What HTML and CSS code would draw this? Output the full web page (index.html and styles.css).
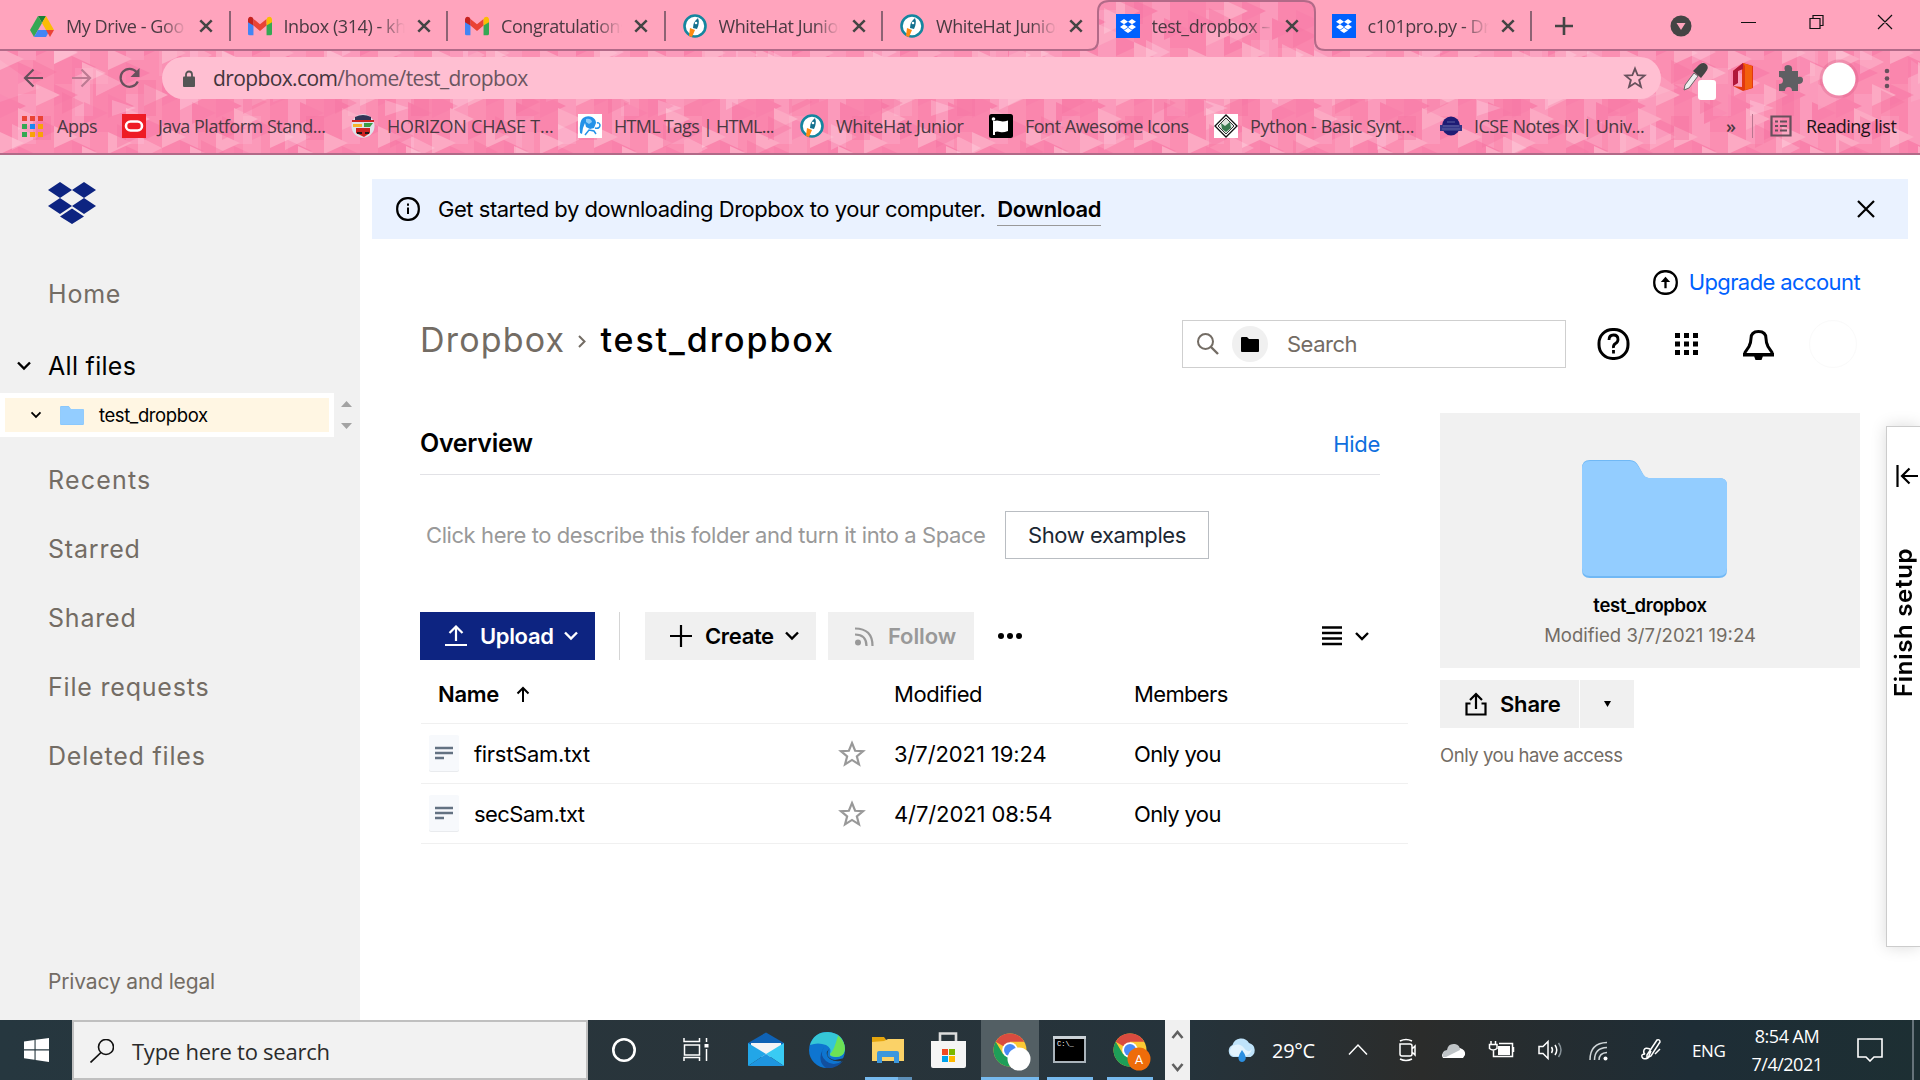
FILE: index.html
```html
<!DOCTYPE html>
<html lang="en">
<head>
<meta charset="utf-8">
<title>test_dropbox – Dropbox</title>
<link rel="stylesheet" href="styles.css">
</head>
<body>
<svg class="defs" width="0" height="0">
  <defs>
    <pattern id="pinkA" width="108" height="84" patternUnits="userSpaceOnUse">
      <rect width="108" height="84" fill="#fb8fb2"/>
      <path fill="#fa86ad" d="M0 0h18v84H0zM54 14h18v70H54zM90 0h18v48H90z"/>
      <path fill="#fb9abb" d="M18 10h18v50H18zM72 0h18v84H72z"/>
      <path fill="#f981ab" d="M0 10l26 12-26 12zM36 34l24 11-24 11zM72 56l24 11-24 11zM84 18l24 11-24 11zM18 62l24 11-24 11zM54 0l24 11-24 11z"/>
      <path fill="#fca9c3" d="M36 0l24 11-24 11zM18 24l24 11-24 11zM54 42l24 11-24 11zM82 62l24 11-24 11zM0 48l24 11-24 11z"/>
    </pattern>
    <pattern id="pinkB" width="273" height="116" patternUnits="userSpaceOnUse">
      <path fill="#fff" fill-opacity=".2" d="M12 8l26 13-26 13zM54 40l24 12-24 12zM96 70l26 13-26 13zM138 20l24 12-24 12zM180 84l26 13-26 13zM222 50l24 12-24 12zM112 100l24 8-24 8zM190 44l22 11-22 11z"/>
      <path fill="#fff" fill-opacity=".09" d="M75 68h18v48H75zM159 40h18v36h-18zM243 0h18v50h-18zM0 60l40 28-40 14z"/>
      <path fill="#f5729f" fill-opacity=".4" d="M33 60l24 12-24 12zM117 8l24 12-24 12zM201 24l24 12-24 12zM243 90l24 12-24 12zM138 80h18v36h-18zM33 0h18v24H33zM222 0l24 12-24 12zM62 92l22 11-22 11z"/>
    </pattern>
    <symbol id="x" viewBox="0 0 14 14"><path d="M2 2l10 10M12 2L2 12" fill="none" stroke="currentColor" stroke-width="2.200"/></symbol>
    <symbol id="dbx" viewBox="0 0 48 42"><path d="M12 0l12 8-12 8L0 8zM36 0l12 8-12 8-12-8zM12 16l12 8-12 8L0 24zM36 16l12 8-12 8-12-8zM24 26.500l12 8-12 7.500-12-7.500z"/></symbol>
    <symbol id="gmail" viewBox="0 0 22 17"><path fill="#4285f4" d="M0 3l5 4v10H1.500Q0 17 0 15.500z"/><path fill="#34a853" d="M22 3l-5 4v10h3.500q1.500 0 1.500-1.500z"/><path fill="#ea4335" d="M5 2l6 5 6-5v6l-6 5-6-5z"/><path fill="#c5221f" d="M0 4V2q1-3 4-1.500L5 2v6L0 5z"/><path fill="#fbbc04" d="M22 4V2q-1-3-4-1.500L17 2v6l5-3z"/></symbol>
    <symbol id="hat" viewBox="0 0 24 24"><circle cx="12" cy="12" r="10.500" fill="#fff" stroke="#14869f" stroke-width="2.600"/><path fill="#14708e" d="M15 4q2 5-1 11l-4-1q0-6 5-10z"/><circle cx="13" cy="9" r="1.300" fill="#fff"/><path fill="#ff8a10" d="M7 14l5 2-3 7-3-1z"/></symbol>
    <symbol id="chev" viewBox="0 0 16 10"><path d="M2 1.500l6 6 6-6" fill="none" stroke="currentColor" stroke-width="2.400"/></symbol>
    <symbol id="star" viewBox="0 0 26 26"><path d="M13 2.800l2.900 7.200 7.400.4-5.800 4.800 2 7.500L13 18.500l-6.500 4.200 2-7.500-5.800-4.800 7.400-.4z" fill="none" stroke="currentColor" stroke-width="2"/></symbol>
    <symbol id="folder" viewBox="0 0 146 118"><path fill="#70b8f5" d="M0 8q0-8 8-8h40q6 0 9 6l5 9q2 3 5 3h71q8 0 8 7v85q0 8-8 8H8q-8 0-8-8z"/><path fill="#93cdff" d="M0 9q0-8 8-8h40q6 0 9 6l5 8q2 3 5 3h71q8 0 8 7v83q0 8-8 8H8q-8 0-8-8z"/></symbol>
    <symbol id="txt" viewBox="0 0 30 37"><rect y="1" width="30" height="36" rx="2" fill="#e9ebee"/><rect width="30" height="36" rx="2" fill="#f7f9fc"/><path d="M6 13h18M6 18h18M6 23h9" stroke="#637282" stroke-width="2.600"/></symbol>
    <symbol id="chrome" viewBox="0 0 36 36"><circle cx="18" cy="18" r="16.500" fill="#fcc934"/><path fill="#d94b3f" d="M18 18L3.700 9.800A16.500 16.500 0 0 1 32.300 9.800H18z"/><path fill="#1e9e58" d="M18 34.500A16.500 16.500 0 0 1 3.700 9.800L11 22l12 5z"/><circle cx="18" cy="18" r="7.800" fill="#fff"/><circle cx="18" cy="18" r="6" fill="#4a8af4"/></symbol>
  </defs>
</svg>

<header class="browser">
  <svg class="backdrop" width="1920" height="155" viewBox="0 0 1920 155">
    <rect width="1920" height="155" fill="url(#pinkA)"/><rect width="1920" height="155" fill="url(#pinkB)"/>
    <path d="M-2 -2V50H1088Q1098 50 1098 40V12Q1098 1 1109 1H1304Q1315 1 1315 12V40Q1315 50 1325 50H1922V-2Z" fill="#ffa4bd" stroke="#b26a88" stroke-width="2"/>
    <path d="M0 154h1920" stroke="#b26a88" stroke-width="2"/>
  </svg>
  <div class="tabs">
    <div class="tab"><svg class="fav" viewBox="0 0 24 22"><path fill="#188038" d="M8 1h8l-4 7z"/><path fill="#34a853" d="M8 1l4 7-8 14-4-7z"/><path fill="#fbbc04" d="M16 1l8 14h-8L12 8z"/><path fill="#4285f4" d="M8 15h12l-4 7H4z"/><path fill="#ea4335" d="M16 15h8l-4 7z"/></svg><span>My Drive - Goo</span><svg class="close"><use href="#x"/></svg></div>
    <div class="tab"><svg class="fav"><use href="#gmail"/></svg><span>Inbox (314) - kh</span><svg class="close"><use href="#x"/></svg></div>
    <div class="tab"><svg class="fav"><use href="#gmail"/></svg><span>Congratulations</span><svg class="close"><use href="#x"/></svg></div>
    <div class="tab"><svg class="fav"><use href="#hat"/></svg><span>WhiteHat Junior</span><svg class="close"><use href="#x"/></svg></div>
    <div class="tab noline"><svg class="fav"><use href="#hat"/></svg><span>WhiteHat Junior</span><svg class="close"><use href="#x"/></svg></div>
    <div class="tab noline active"><i class="fav blue"><svg width="16" height="16"><use href="#dbx"/></svg></i><span>test_dropbox –</span><svg class="close"><use href="#x"/></svg></div>
    <div class="tab"><i class="fav blue"><svg width="16" height="16"><use href="#dbx"/></svg></i><span>c101pro.py - Dr</span><svg class="close"><use href="#x"/></svg></div>
    <svg class="plus" width="18" height="18" viewBox="0 0 18 18"><path d="M9 0v18M0 9h18" stroke="#444" stroke-width="2.600"/></svg>
    <svg class="guest" width="22" height="22" viewBox="0 0 22 22"><circle cx="11" cy="11" r="10.500" fill="#444"/><path d="M6.500 8h9l-4.500 7z" fill="#ffa4bd"/></svg>
    <svg class="win" width="152" height="16" viewBox="0 0 152 16"><path d="M0 8.500h15M69 4.500h10v10H69zM72 4.500v-3h10v10h-3M137 1l14 14M151 1l-14 14" fill="none" stroke="#111" stroke-width="1.200"/></svg>
  </div>
  <div class="toolbar">
    <svg class="navs" width="162" height="42" viewBox="0 0 162 42"><g fill="none" stroke-width="2.200"><path d="M43 21H25M33.500 12.500L25 21l8.500 8.500" stroke="#67505c"/><path d="M72 21h18M81.500 12.500L90 21l-8.500 8.500" stroke="#bd7a93"/><path d="M136.500 15a9 9 0 1 0 1.300 9.500" stroke="#67505c"/></g><path d="M139.500 11v9h-9z" fill="#67505c"/></svg>
    <div class="omni"><svg width="12" height="17" viewBox="0 0 12 17"><path d="M3 7V4.500a3 3 0 0 1 6 0V7" fill="none" stroke="#555" stroke-width="1.800"/><rect y="6.500" width="12" height="10.500" rx="1" fill="#555"/></svg><p><b>dropbox.com</b>/home/test_dropbox</p><svg class="fave" width="24" height="24"><use href="#star"/></svg></div>
    <svg class="ext" width="252" height="46" viewBox="0 0 252 46">
      <path d="M24 28l9-12 4 3-9 12-5 2z" fill="#eee" stroke="#666"/><path d="M32 14l4-4q5-6 9-3t-1 9l-4 5z" fill="#444"/><rect x="37" y="23" width="18" height="20" rx="3" fill="#fff"/>
      <path d="M72 14l10-8 10 3v22l-10 3-10-5 9 1V12l-5 2v12l-4 2z" fill="#e2380f"/><path d="M72 14l10-8v6l-5 2v12l-5 3z" fill="#b0173a"/><path d="M82 6l9 3v22l-7 2V9z" fill="#f3600f"/>
      <path d="M118 14h6q-2-6 3-6t4 6h6v6q5-1 5 3t-5 4v7h-6q0-4-3.500-4T124 34h-6v-7q4 0 4-3.500T118 20z" fill="#5f5f63"/>
      <circle cx="178" cy="22" r="19.500" fill="#d95e87" fill-opacity=".35"/><circle cx="178" cy="22" r="16.500" fill="#fff"/>
      <circle cx="226" cy="14" r="2.300" fill="#67505c"/><circle cx="226" cy="21.500" r="2.300" fill="#67505c"/><circle cx="226" cy="29" r="2.300" fill="#67505c"/>
    </svg>
  </div>
  <nav class="marks">
    <a class="m1"><svg width="21" height="21" viewBox="0 0 21 21"><path fill="#ea4335" d="M0 0h5v5H0zM8 0h5v5H8zM16 0h5v5h-5z"/><path fill="#34a853" d="M0 8h5v5H0zM0 16h5v5H0z"/><path fill="#1a87f0" d="M8 8h5v5H8z"/><path fill="#f9a208" d="M16 8h5v5h-5zM8 16h5v5H8zM16 16h5v5h-5z"/></svg>Apps</a>
    <a class="m2"><svg width="24" height="24" viewBox="0 0 24 24"><path fill="#ee1c25" d="M0 0h24v24H0z"/><rect x="4" y="7.500" width="16" height="9" rx="4.500" fill="none" stroke="#fff" stroke-width="2.600"/></svg>Java Platform Stand...</a>
    <a class="m3"><svg width="24" height="24" viewBox="0 0 24 24"><ellipse cx="12" cy="12" rx="11.500" ry="11.800" fill="#dfe2ea"/><path fill="#335" d="M4 3q8-4 16 0v3H4z"/><path fill="#c22" d="M5 14h14v5l-6 4-8-4zM1 6h22v2H1z"/><path fill="#f5b42a" d="M2 10h9v3H2z"/><path fill="#3c9d48" d="M13 9h9l-3 4h-6z"/><path fill="#201518" d="M6 18h5v2H6zM14 18h4v2h-4z"/></svg>HORIZON CHASE T...</a>
    <a class="m4"><svg width="24" height="24" viewBox="0 0 24 24"><path fill="#fff" d="M0 0h24v24H0z"/><path fill="#2492e8" d="M2 19Q1 7 5 4q4-3 9-1 4 2 4 6l-2 5-4 1-4-2-1-4-2 5-1 6z"/><path fill="#8ccbf8" d="M8 5q5-1 6 3l-3 2-3-2z"/><path d="M7 21l4-5 5 1 2 3M17 14q5 1 5-3-1-3-3-2" fill="none" stroke="#2492e8" stroke-width="1.500"/></svg>HTML Tags | HTML...</a>
    <a class="m5"><svg width="24" height="24"><use href="#hat"/></svg>WhiteHat Junior</a>
    <a class="m6"><svg width="24" height="24" viewBox="0 0 24 24"><rect width="24" height="24" rx="2.500"/><path fill="#fff" d="M5 7q3-1 6 0t8-.5V17q-5 2-8 1t-5 0v3H4V7z"/><circle cx="4.500" cy="5" r="1.800" fill="#fff"/></svg>Font Awesome Icons</a>
    <a class="m7"><svg width="24" height="24" viewBox="0 0 24 24"><path fill="#fff" d="M0 0h24v24H0z"/><path d="M12 1l11 11-11 11L1 12z" fill="#fff" stroke="#111" stroke-width="1.300"/><path d="M12 4l8 8-8 8-8-8z" fill="#dde4de" stroke="#333"/><path d="M7 9l4 3 5-4 1 6-5 4-4-3z" fill="#397950"/></svg>Python - Basic Synt...</a>
    <a class="m8"><svg width="22" height="20" viewBox="0 0 22 20"><ellipse cx="11" cy="10" rx="9" ry="9.500" fill="#1e1c74"/><path d="M0 9h22v6H0z" fill="#343687"/><path d="M3 10h16M2 13h18M7 6h8" stroke="#5c60a0"/></svg>ICSE Notes IX | Univ...</a>
    <b class="more">»</b><i class="bar"></i>
    <a class="m9"><svg width="22" height="22" viewBox="0 0 22 22"><path d="M1.500 1.500h19v19h-19z" fill="none" stroke="#67505c" stroke-width="2.200"/><path d="M5 6.500h3M10 6.500h7M5 11h3M10 11h7M5 15.500h3M10 15.500h7" stroke="#67505c" stroke-width="2.200"/></svg>Reading list</a>
  </nav>
</header>

<main class="app">
  <aside class="side">
    <svg class="logo" width="48" height="42" fill="#0d2481"><use href="#dbx"/></svg>
    <a class="home">Home</a>
    <a class="all"><svg width="16" height="10"><use href="#chev"/></svg>All files</a>
    <div class="tree"><div class="well"><div class="node"><svg width="12" height="8"><use href="#chev"/></svg><svg width="24" height="19"><use href="#folder"/></svg>test_dropbox</div></div>
      <svg class="arrows" width="26" height="44" viewBox="0 0 26 44"><path d="M7 14l5.500-6 5.500 6zM7 30l5.500 6 5.500-6z" fill="#a3a3a3"/></svg></div>
    <nav class="links"><a class="wide">Recents</a><a>Starred</a><a>Shared</a><a>File requests</a><a>Deleted files</a></nav>
    <footer>Privacy and legal</footer>
  </aside>

  <section class="content">
    <div class="banner">
      <svg width="24" height="24" viewBox="0 0 24 24"><rect x="1.200" y="1.200" width="21.600" height="21.600" rx="10" fill="none" stroke="#000" stroke-width="2.200"/><path d="M12 10.500V17M12 6.500v2.300" stroke="#000" stroke-width="2"/></svg>
      <span class="msg">Get started by downloading Dropbox to your computer.</span><b>Download</b>
      <svg class="dismiss" width="18" height="18" viewBox="0 0 18 18"><path d="M1 1l16 16M17 1L1 17" stroke="#000" stroke-width="2.200"/></svg>
    </div>
    <div class="upgrade"><svg width="25" height="25" viewBox="0 0 24 24"><rect x="1.200" y="1.200" width="21.600" height="21.600" rx="10" fill="none" stroke="#000" stroke-width="2.200"/><path d="M12 17.500V9" stroke="#000" stroke-width="2.200"/><path d="M7.500 11.500L12 6.500l4.500 5z"/></svg><span>Upgrade account</span></div>
    <div class="titlebar">
      <h1><span>Dropbox</span><svg width="10" height="15" viewBox="0 0 10 15"><path d="M2 2l5.500 5.500L2 13" fill="none" stroke="#736c64" stroke-width="2"/></svg><strong>test_dropbox</strong></h1>
      <div class="search"><svg width="24" height="24" viewBox="0 0 24 24"><circle cx="9.500" cy="9.500" r="7.500" fill="none" stroke="#736c64" stroke-width="2"/><path d="M15 15l7 7" stroke="#736c64" stroke-width="2.400"/></svg><i><svg width="18" height="15" viewBox="0 0 18 15"><path d="M0 1q0-1 1-1h5l2 2h9q1 0 1 1v11q0 1-1 1H1q-1 0-1-1z"/></svg></i><span>Search</span></div>
      <svg class="tools" width="294" height="50" viewBox="0 0 294 50">
        <rect x="33" y="10.500" width="29" height="29" rx="13.500" fill="none" stroke="#000" stroke-width="3"/><path d="M43 21q0-5 4.500-5t4.500 4.500q0 2.500-2.500 4T47.500 29M47.500 31v3.500" fill="none" stroke="#000" stroke-width="2.800"/>
        <path d="M109 14h5v5h-5zM118 14h5v5h-5zM127 14h5v5h-5zM109 22.500h5v5h-5zM118 22.500h5v5h-5zM127 22.500h5v5h-5zM109 31h5v5h-5zM118 31h5v5h-5zM127 31h5v5h-5z"/>
        <path d="M179 35.500v-2l4-6q2-4 2-8 0-7 7.500-7t7.500 7q0 4 2 8l4 6v2z" fill="none" stroke="#000" stroke-width="3"/><path d="M177 34h31v3.500h-31zM188 37h9l-1.500 4h-6z"/>
        <circle cx="267" cy="25" r="23.500" fill="none" stroke="#fafafa"/>
      </svg>
    </div>
    <div class="columns">
      <div class="files">
        <div class="overview"><h2>Overview</h2><a>Hide</a></div>
        <div class="describe"><span>Click here to describe this folder and turn it into a Space</span><div class="examples">Show examples</div></div>
        <div class="actions">
          <div class="btn upload"><svg width="22" height="22" viewBox="0 0 22 22"><path d="M11 16V2M4.500 8L11 1.500 17.500 8M0 20h22" fill="none" stroke="#fff" stroke-width="2.200"/></svg><span>Upload</span><svg width="16" height="10"><use href="#chev"/></svg></div>
          <i class="rule"></i>
          <div class="btn create"><svg width="22" height="22" viewBox="0 0 22 22"><path d="M11 0v22M0 11h22" stroke="#000" stroke-width="2.200"/></svg><span>Create</span><svg width="16" height="10"><use href="#chev"/></svg></div>
          <div class="btn follow"><svg width="19" height="19" viewBox="0 0 19 19"><g fill="none" stroke="#999" stroke-width="2.200"><path d="M0 1.500q17.500 0 17.500 17.500M0 7.500q11.500 0 11.500 11.500"/></g><circle cx="3" cy="15.500" r="3" fill="#999"/></svg><span>Follow</span></div>
          <svg class="dots" width="24" height="6" viewBox="0 0 24 6"><circle cx="3" cy="3" r="3"/><circle cx="12" cy="3" r="3"/><circle cx="21" cy="3" r="3"/></svg>
          <svg class="view" width="48" height="20" viewBox="0 0 48 20"><path d="M0 1.500h20M0 7h20M0 12.500h20M0 18h20" stroke="#000" stroke-width="2.400"/><path d="M34 7l6 6 6-6" fill="none" stroke="#000" stroke-width="2.400"/></svg>
        </div>
        <div class="table">
          <div class="row head"><div class="name"><b>Name</b><svg width="14" height="16" viewBox="0 0 14 16"><path d="M7 16V2M1.500 7.500L7 2l5.500 5.500" fill="none" stroke="#000" stroke-width="2"/></svg></div><div class="date mod">Modified</div><div class="who">Members</div></div>
          <div class="row"><div class="name"><svg width="30" height="37"><use href="#txt"/></svg><span>firstSam.txt</span><svg class="st" width="28" height="28"><use href="#star"/></svg></div><div class="date">3/7/2021 19:24</div><div class="who">Only you</div></div>
          <div class="row"><div class="name"><svg width="30" height="37"><use href="#txt"/></svg><span class="tight">secSam.txt</span><svg class="st" width="28" height="28"><use href="#star"/></svg></div><div class="date">4/7/2021 08:54</div><div class="who">Only you</div></div>
        </div>
      </div>
      <div class="details">
        <div class="card"><svg width="145" height="118" viewBox="0 0 146 118" preserveAspectRatio="none"><use href="#folder" width="146" height="118"/></svg><b>test_dropbox</b><span>Modified 3/7/2021 19:24</span></div>
        <div class="share"><div class="go"><svg width="22" height="24" viewBox="0 0 22 24"><path d="M11 17V2M5 8l6-6 6 6M5.500 11.500H1.500V22.500h19v-11h-4" fill="none" stroke="#000" stroke-width="2.200"/></svg><span>Share</span></div><div class="drop"><svg width="7" height="6" viewBox="0 0 7 6"><path d="M0 0h7L3.500 6z"/></svg></div></div>
        <p>Only you have access</p>
      </div>
    </div>
  </section>
  <div class="setup"><svg width="22" height="24" viewBox="0 0 22 24"><path d="M1.500 1v22M22 12H6M13.500 4.500L6 12l7.500 7.500" fill="none" stroke="#000" stroke-width="2.200"/></svg><span>Finish setup</span></div>
</main>

<footer class="taskbar">
  <div class="start"><svg width="25" height="24" viewBox="0 0 25 24"><path fill="#fff" d="M0 3.500l10.500-1.500v9.300H0zM11.600 1.800L25 0v11.300H11.600zM0 12.400h10.500v9.300L0 20.300zM11.600 12.400H25V24l-13.400-1.900z"/></svg></div>
  <div class="find"><svg width="24" height="24" viewBox="0 0 24 24"><circle cx="16" cy="8" r="7.500" fill="none" stroke="#111" stroke-width="1.600"/><path d="M11 13.500L.5 23.500" stroke="#111" stroke-width="1.700"/></svg><span>Type here to search</span></div>
  <div class="pins">
    <svg width="577" height="60" viewBox="588 0 577 60">
      <circle cx="624" cy="30" r="10.700" fill="none" stroke="#fff" stroke-width="2.600"/>
      <path d="M684 18v3.500h15.500V18M684 41v-3.500h15.500V41M684.500 25h15v10h-15zM706.500 18v4M706.500 29v12" fill="none" stroke="#fff" stroke-width="1.500"/><path d="M704.500 24h4v3.500h-4z" fill="#fff"/>
      <path fill="#0f62b5" d="M748 23l18-10.500L784 23v6h-36z"/><path fill="#f4f4f6" d="M751 23h30v14h-30z"/><path fill="#22a6e8" d="M748 23l18 11-18 12z"/><path fill="#39cbf4" d="M784 23v23l-18-12z"/><path fill="#1e95df" d="M748 46l18-12 18 12z"/>
      <circle cx="827" cy="30" r="18" fill="#0e75d0"/><path fill="#35c6d6" d="M810 25Q814 12 828 12q16 1 17 17-1 8-9 8-7 0-6-3 2-6-4-9-8-3-16 0z"/><path fill="#6de254" d="M838 15.500q7 6 7 13.500-1 8-9 8-6-1-6-3 4-3 8-18.500z"/><path fill="#124f9e" d="M824 27q-5 8 2 14t17 0q-6 8-17 7-10-7-2-21z"/><path fill="#27343b" d="M829 29q-5 9 6 11l10-2v2q-9 3-15-1-6-5-1-10z"/>
      <path fill="#e5a50d" d="M872 17h12l3 4v4h-15z"/><path fill="#fbd267" d="M872 22l12-1 4-2h16v22h-32z"/><path fill="#3c97dd" d="M877 43V33q0-2 2-2h18q2 0 2 2v10h-5v-6h-12v6z"/>
      <path d="M940 24V13.500h16V24" fill="none" stroke="#ddd" stroke-width="2.600"/><path fill="#f5f5f5" d="M931 21h35v25q0 2-2 2h-31q-2 0-2-2z"/><path fill="#f04a23" d="M942 29h6v6h-6z"/><path fill="#7bb800" d="M949 29h6v6h-6z"/><path fill="#00a2ec" d="M942 36h6v6h-6z"/><path fill="#ffb900" d="M949 36h6v6h-6z"/>
      <path fill="#535f64" d="M981 0h58v60h-58z"/><use href="#chrome" x="992" y="12" width="36" height="36"/><circle cx="1019" cy="39" r="11.500" fill="#fff"/>
      <path fill="#000" stroke="#aab4bb" stroke-width="2" d="M1054 17h31v25h-31z"/><path fill="#cbd2d7" d="M1053 16h33v3h-33z"/>
      <use href="#chrome" x="1112" y="12" width="36" height="36"/><circle cx="1139" cy="39" r="11.500" fill="#ee6c0a"/>
      <path fill="#76b9ed" d="M865 57h33v3h-33zM981 57h58v3h-58zM1047 57h46v3h-46zM1107 57h46v3h-46z"/><path fill="#5d8fb8" d="M898 57h14v3h-14z"/>
      <text class="cmd" x="1057" y="26">C:\_</text><text class="av" x="1139" y="43.500">A</text>
    </svg>
  </div>
  <svg class="scroll" width="25" height="60" viewBox="0 0 25 60"><path d="M7.500 18l5-6 5 6M7.500 44l5 6 5-6" fill="none" stroke="#606060" stroke-width="2.600"/></svg>
  <svg class="rain" width="32" height="26" viewBox="0 0 32 26"><path d="M7 19a6.500 6.500 0 0 1-.5-12A9 9 0 0 1 23 5a7.500 7.500 0 0 1 1.500 14z" fill="#bfe3fa"/><path d="M6 8q8-4 12 2t8 1q-2 7-8 7H8q-7-2-2-10z" fill="#e2f3fd"/><path d="M16 12q6 8 2.500 11-2.500 2-5 0-3-3 2.500-11z" fill="#2c8fe0"/></svg>
  <span class="temp">29°C</span>
  <svg class="tray" width="330" height="60" viewBox="1340 0 330 60"><g fill="none" stroke="#fff" stroke-width="1.500">
    <path d="M1349 34.500l9-9.500 9 9.500M1400 24h10q2 0 2 2v8q0 2-2 2h-8q-2 0-2-2zM1412 29l3-3v9l-3-3M1400 21q6-3 12 0M1400 39q6 3 12 0"/>
    <path d="M1491 21v3.500M1495.500 21v3.500M1489.500 24.500h7.500v4q-4 3-7.500 0zM1493.500 30v6.500h19v-13H1499M1513.500 27v5"/>
    <path d="M1539 26.500h4l5-5v17l-5-5h-4zM1551.500 27q2 3 0 6M1555 25q3.500 5 0 10"/><path d="M1558.500 23q5 7 0 14" stroke="#859096"/>
    <path d="M1590 40q0-17 17-17.500M1594.500 40q0-12 12.500-12.500M1599 40q0-7 8-7.500" stroke="#cfd5d8"/><path d="M1647 35l10-15q3-1 3 2l-9 14-4 2zM1650 29q-5-2-6 1t1 4q-4 0-3 3t6 1l3-7M1655 34l5-5"/>
  </g><path fill="#fff" d="M1498 26h12v9h-12zM1443 38q-3-4 3-7l14-3q6 2 5 7l-2 3z"/><path fill="#bfc4c7" d="M1443 37q-2-6 4-7 1-7 8-6 5 1 5 6l-14 7z"/><circle cx="1605.500" cy="38.500" r="2" fill="#fff"/></svg>
  <span class="lang">ENG</span>
  <div class="clock"><span>8:54 AM</span><span>7/4/2021</span></div>
  <svg class="note" width="26" height="24" viewBox="0 0 26 24"><path d="M1 1h24v18h-8l-4 4-4-4H1z" fill="none" stroke="#fff" stroke-width="1.600"/></svg>
  <i class="peek"></i>
</footer>
</body>
</html>
```

FILE: styles.css
```css
* { box-sizing: border-box; }
body { margin: 0; width: 1920px; height: 1080px; overflow: hidden; background: #fff; color: #000; font-family: Inter, "Liberation Sans", sans-serif; display: flex; flex-direction: column; }
svg { display: block; flex: none; }
i { display: block; flex: none; }
p, h1, h2 { margin: 0; font-weight: 400; }
span, a, b { white-space: nowrap; }
.defs { position: absolute; }

/* Browser chrome */
.browser { height: 155px; flex: none; position: relative; font-family: "Open Sans", "Noto Sans", sans-serif; color: #4a3a42; isolation: isolate; }
.backdrop { position: absolute; inset: 0; z-index: -1; }
.tabs { height: 51px; display: flex; align-items: center; padding-left: 13px; }
.tab { width: 217.5px; height: 30px; flex: none; display: flex; align-items: center; padding-left: 17px; border-right: 2px solid #8d6374; }
.tab.noline { border-color: transparent; }
.tab.active { padding-left: 15px; width: 214px; }
.fav { width: 24px; height: 24px; margin-right: 12px; }
.fav.blue { background: #0061fe; display: grid; place-items: center; fill: #fff; }
.tab span { width: 121px; overflow: hidden; font-size: 18px; letter-spacing: -.43px; -webkit-mask-image: linear-gradient(90deg, #000 78%, transparent); mask-image: linear-gradient(90deg, #000 78%, transparent); }
.close { width: 16px; height: 16px; margin-left: 11px; color: #444; }
.plus { margin-left: 23px; }
.guest { margin-left: 97px; }
.win { margin: -8px 0 0 49px; }
.toolbar { height: 54px; display: flex; padding-top: 6px; }
.omni { width: 1499px; flex: none; height: 42px; border-radius: 21px; background: #ffbfd2; display: flex; align-items: center; padding-left: 21px; }
.omni p { margin-left: 18px; font-size: 21px; letter-spacing: -.62px; color: #6b5560; flex: 1; }
.omni b { font-weight: 400; color: #43353c; }
.fave { margin-right: 14px; color: #67505c; }
.marks { display: flex; height: 42px; align-items: center; padding-left: 22px; font-size: 18px; letter-spacing: -.5px; }
.marks a { display: flex; align-items: center; gap: 12px; flex: none; }
.marks .m1, .marks .m9 { gap: 14px; }
.m1 { width: 100px; } .m2 { width: 229px; } .m3 { width: 227px; letter-spacing: -.23px; } .m4 { width: 222px; letter-spacing: -.75px; } .m5 { width: 189px; letter-spacing: -.35px; } .m6 { width: 225px; } .m7 { width: 226px; letter-spacing: -.4px; } .m8 { width: 286px; }
.more { width: 26px; font-weight: 600; }
.bar { width: 1px; height: 24px; background: #b9768f; margin-right: 17px; }
.m9 { color: #1e1418; }

/* Page */
.app { height: 865px; flex: none; display: flex; position: relative; }
.side { width: 360px; background: #f1f1f1; color: #736c64; font-size: 25px; letter-spacing: .8px; display: flex; flex-direction: column; }
.side a { padding-left: 48px; line-height: 30px; }
.logo { margin: 27px 0 0 48px; }
.side .home { margin-top: 55px; }
.side .all { margin-top: 42px; padding-left: 16px; display: flex; align-items: center; gap: 16px; color: #000; letter-spacing: .3px; }
.tree { height: 44px; margin-top: 12px; display: flex; color: #000; }
.well { width: 334px; background: #fff; padding: 5px; }
.node { height: 34px; background: #fff6e3; display: flex; align-items: center; padding-left: 25px; font-size: 18.5px; letter-spacing: -.4px; }
.node svg:nth-child(2) { margin: 0 15px 0 18px; }
.links { display: flex; flex-direction: column; gap: 39px; margin-top: 28px; }
.links .wide { letter-spacing: 1.2px; }
.side footer { margin: auto 0 26px 48px; font-size: 21px; line-height: 24px; letter-spacing: -.15px; }
.content { flex: 1; padding: 24px 12px 0; }
.banner { height: 60px; background: #eaf2ff; display: flex; align-items: center; padding: 0 33px 0 24px; font-size: 22px; letter-spacing: -.47px; }
.banner .msg { margin: 0 12px 0 18px; }
.banner b { font-weight: 600; line-height: 32px; border-bottom: 1px solid #999; letter-spacing: -.35px; }
.dismiss { margin-left: auto; }
.upgrade { display: flex; justify-content: flex-end; align-items: center; gap: 11px; height: 30px; margin: 28px 48px 0; color: #0061fe; font-size: 22px; letter-spacing: -.6px; }
.titlebar { height: 50px; display: flex; align-items: center; margin: 22px 0 0 48px; }
h1 { width: 762px; display: flex; align-items: center; font-size: 34px; letter-spacing: 1.2px; color: #736c64; margin-top: -9px; }
h1 svg { margin: 4px 13px 0 12px; }
h1 strong { font-weight: 450; color: #000; letter-spacing: 1.9px; }
.search { width: 384px; height: 48px; border: 1px solid #cfcfcf; display: flex; align-items: center; padding-left: 13px; font-size: 22px; letter-spacing: -.5px; color: #736c64; }
.search i { width: 36px; height: 36px; border-radius: 50%; background: #f0f0f0; display: grid; place-items: center; margin: 0 19px 0 12px; }
.columns { display: flex; gap: 32px; margin: 44px 0 0 48px; }
.files { width: 988px; height: 520px; }
.overview { width: 960px; height: 62px; border-bottom: 1px solid #e2e2e6; display: flex; justify-content: space-between; align-items: center; font-size: 22px; letter-spacing: -.3px; }
h2 { font-size: 25px; font-weight: 600; margin-top: -2px; }
.overview a { color: #0f6fde; }
.describe { display: flex; align-items: center; margin: 36px 0 0 6px; font-size: 22px; letter-spacing: -.42px; color: #999; height: 48px; }
.describe span { width: 579px; }
.examples { width: 204px; height: 48px; border: 1px solid #b9bdc2; color: #1b2733; display: grid; place-items: center; }
.actions { height: 48px; margin-top: 53px; display: flex; align-items: center; }
.btn { height: 48px; background: #f0f0f0; display: flex; align-items: center; font-size: 22px; font-weight: 600; letter-spacing: -.35px; }
.upload { width: 175px; padding-left: 25px; background: #0d2481; color: #fff; }
.upload span { width: 75px; margin: 0 8px 0 13px; }
.rule { width: 1px; height: 48px; background: #d5d5d5; margin: 0 25px 0 24px; }
.create { width: 171px; padding-left: 25px; }
.create span { width: 70px; margin: 0 9px 0 13px; }
.follow { width: 146px; margin-left: 12px; padding-left: 27px; color: #999; gap: 14px; letter-spacing: -.1px; }
.dots { margin-left: 24px; }
.view { margin-left: 300px; }
.table { font-size: 22px; letter-spacing: -.3px; }
.row { height: 60px; border-bottom: 1px solid #f0f0f0; display: flex; align-items: center; margin-left: 1px; }
.row.head { height: 64px; padding-top: 4px; }
.name { width: 473px; display: flex; align-items: center; padding-left: 8px; }
.head .name { padding-left: 17px; gap: 17px; }
.name b { font-weight: 600; }
.name span { margin-left: 15px; }
.name .tight { letter-spacing: -.55px; }
.st { margin: 0 28px 0 auto; color: #999; }
.date { width: 240px; letter-spacing: -.1px; }
.mod { letter-spacing: -.45px; }
.who { letter-spacing: -.65px; }
.details { width: 420px; }
.card { height: 255px; background: #f1f1f1; display: flex; flex-direction: column; align-items: center; padding-top: 47px; color: #736c64; font-size: 18.5px; }
.card svg { margin-left: 8px; }
.card b { margin-top: 15px; color: #000; font-weight: 600; line-height: 24px; letter-spacing: -.3px; }
.card span { margin-top: 6px; line-height: 24px; }
.share { display: flex; gap: 1px; margin-top: 12px; height: 48px; font-size: 22px; font-weight: 600; letter-spacing: -.2px; }
.go { width: 139px; background: #f0f0f0; display: flex; align-items: center; padding-left: 25px; gap: 13px; }
.drop { width: 54px; background: #f0f0f0; display: grid; place-items: center; }
.details p { font-size: 18.5px; line-height: 24px; margin-top: 15px; color: #736c64; letter-spacing: -.45px; }
.setup { position: absolute; right: 0; top: 271px; width: 34px; height: 521px; background: #fff; border: 1px solid #ccc; border-right: 0; box-shadow: 0 0 16px rgba(0,0,0,.15); padding: 37px 0 0 9px; }
.setup span { display: block; height: 150px; margin: 59px 0 0 -6px; writing-mode: vertical-rl; transform: rotate(180deg); font-size: 24px; line-height: 28px; font-weight: 600; letter-spacing: .7px; }

/* Taskbar */
.taskbar { height: 60px; flex: none; display: flex; align-items: center; color: #fff; font-family: "Open Sans", "Noto Sans", sans-serif; background: linear-gradient(90deg, #26373f, #29343a 40%, #25333b 62%, #2b2c2b 74%, #1e2d36 88%, #1d2f33); }
.start { width: 72px; display: grid; place-items: center; }
.find { width: 516px; height: 60px; background: #f2f2f2; border: 2px solid #c0c0c0; color: #2b2b2b; display: flex; align-items: center; padding: 1px 0 0 16px; gap: 18px; font-size: 22px; letter-spacing: -.25px; }
.cmd { font: 7px "Liberation Mono", monospace; fill: #fff; }
.av { font: 13px Roboto, sans-serif; fill: #fff; text-anchor: middle; }
.scroll { background: #f0f0f0; }
.rain { margin: 2px 0 0 36px; }
.temp { width: 68px; margin-left: 14px; font-size: 20px; letter-spacing: -.3px; }
.lang { width: 58px; margin-left: 22px; font-size: 17px; letter-spacing: -.4px; }
.clock { width: 74px; display: flex; flex-direction: column; align-items: center; font-size: 18px; line-height: 28px; letter-spacing: -.5px; }
.note { margin-left: 33px; }
.peek { width: 2px; height: 60px; background: #66737a; margin-left: 29px; }
```
